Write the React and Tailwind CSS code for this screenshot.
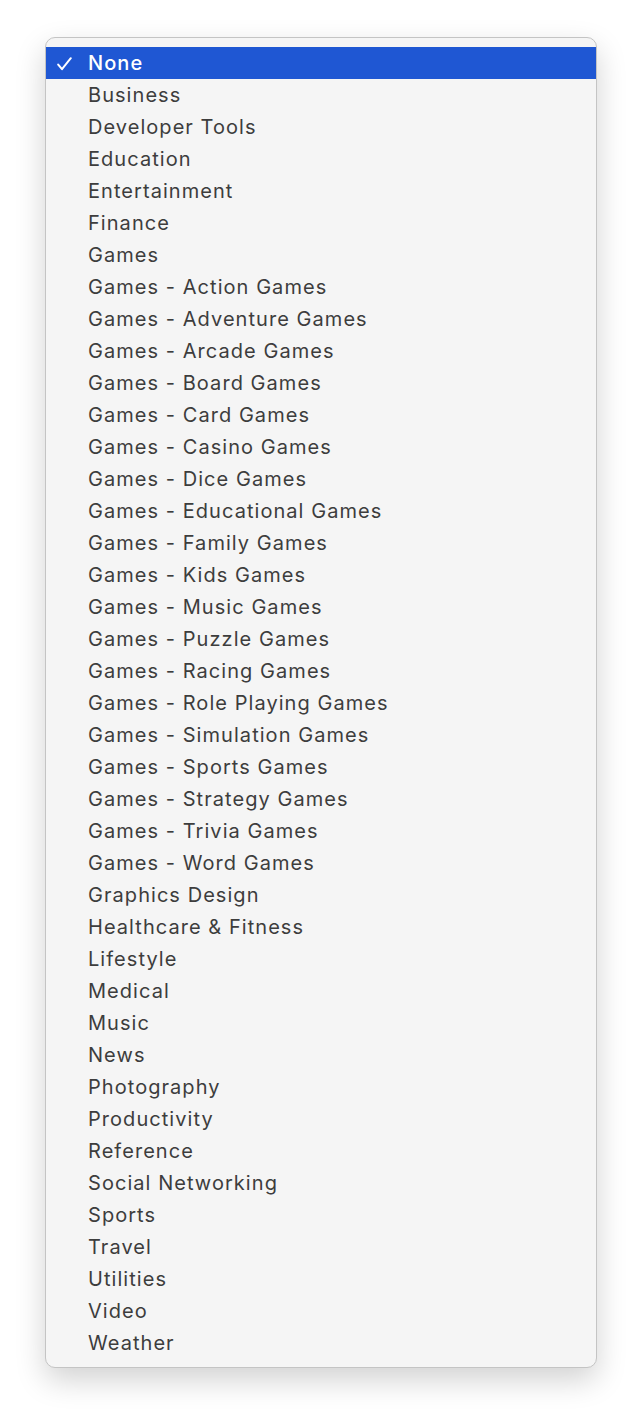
import React from 'react';

const categories = [
  'None',
  'Business',
  'Developer Tools',
  'Education',
  'Entertainment',
  'Finance',
  'Games',
  'Games - Action Games',
  'Games - Adventure Games',
  'Games - Arcade Games',
  'Games - Board Games',
  'Games - Card Games',
  'Games - Casino Games',
  'Games - Dice Games',
  'Games - Educational Games',
  'Games - Family Games',
  'Games - Kids Games',
  'Games - Music Games',
  'Games - Puzzle Games',
  'Games - Racing Games',
  'Games - Role Playing Games',
  'Games - Simulation Games',
  'Games - Sports Games',
  'Games - Strategy Games',
  'Games - Trivia Games',
  'Games - Word Games',
  'Graphics Design',
  'Healthcare & Fitness',
  'Lifestyle',
  'Medical',
  'Music',
  'News',
  'Photography',
  'Productivity',
  'Reference',
  'Social Networking',
  'Sports',
  'Travel',
  'Utilities',
  'Video',
  'Weather',
];

const Check = () => (
  <svg width="15" height="14" viewBox="0 0 15 14" fill="none">
    <path d="M1.2 7.6 L5 12.2 L13.8 1.2" stroke="white" strokeWidth="2" strokeLinecap="round" strokeLinejoin="round" />
  </svg>
);

const MenuItem = ({ label, selected }) => (
  <div
    className={`h-8 flex items-center ${selected ? 'bg-[#1f57d3] text-white font-medium' : 'text-[#3d3d3d]'}`}
  >
    <span className="w-[42px] flex pl-[11px] pt-[2px]">
      {selected ? <Check /> : null}
    </span>
    <span className="text-[20px] leading-none tracking-[1.05px]">{label}</span>
  </div>
);

export default function App() {
  return (
    <div className="w-[642px] h-[1420px] bg-white pt-[37px] pl-[45px] font-['Inter','Noto_Sans',sans-serif]">
      <div className="w-[552px] pt-[9px] pb-[8px] bg-[#f5f5f5] border border-[#c4c4c4] rounded-[10px] overflow-hidden shadow-[0_12px_30px_rgba(0,0,0,0.18)]">
        {categories.map((c, i) => (
          <MenuItem key={c} label={c} selected={i === 0} />
        ))}
      </div>
    </div>
  );
}
